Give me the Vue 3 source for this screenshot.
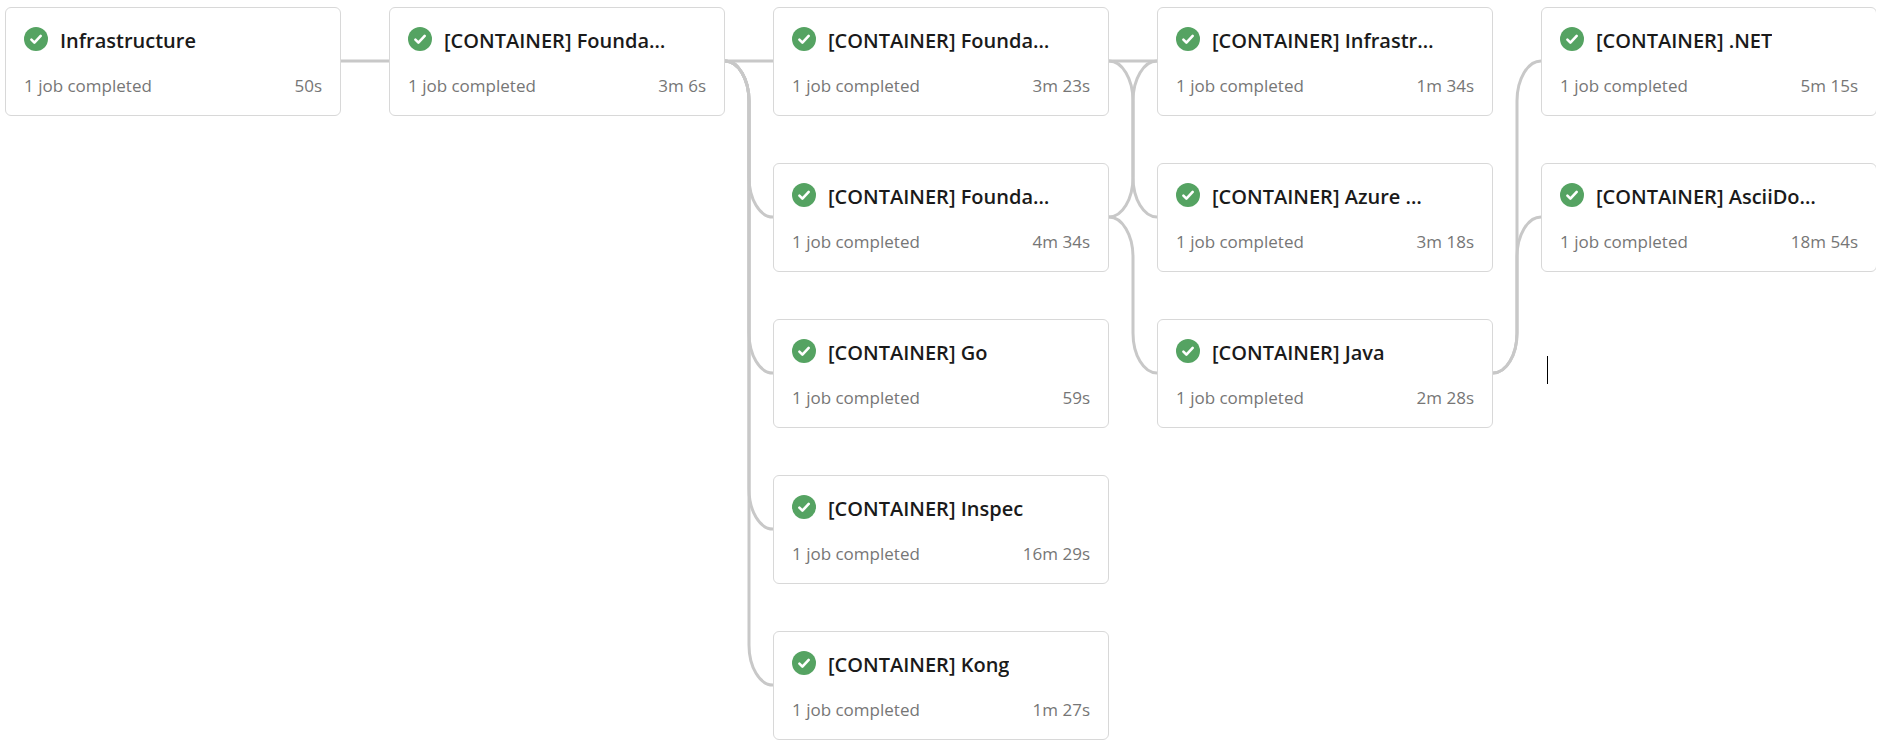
<script setup>
const columns = [
  [{ name: 'Infrastructure', time: '50s' }],
  [{ name: '[CONTAINER] Founda…', time: '3m 6s' }],
  [
    { name: '[CONTAINER] Founda…', time: '3m 23s' },
    { name: '[CONTAINER] Founda…', time: '4m 34s' },
    { name: '[CONTAINER] Go', time: '59s' },
    { name: '[CONTAINER] Inspec', time: '16m 29s' },
    { name: '[CONTAINER] Kong', time: '1m 27s' },
  ],
  [
    { name: '[CONTAINER] Infrastr…', time: '1m 34s' },
    { name: '[CONTAINER] Azure …', time: '3m 18s' },
    { name: '[CONTAINER] Java', time: '2m 28s' },
  ],
  [
    { name: '[CONTAINER] .NET', time: '5m 15s' },
    { name: '[CONTAINER] AsciiDo…', time: '18m 54s' },
  ],
]

// Each pair is [row on the left, row on the right] for the gap after a column.
const links = [
  [[0, 0]],
  [[0, 0], [0, 1], [0, 2], [0, 3], [0, 4]],
  [[0, 0], [0, 1], [1, 0], [1, 2]],
  [[2, 0], [2, 1]],
]

const ROW = 156
const MID = 54

function linkPath([from, to]) {
  const y1 = from * ROW + MID
  const y2 = to * ROW + MID
  if (y1 === y2) return `M0 ${y1}H48`
  const d = y2 > y1 ? 1 : -1
  const sweep = d > 0 ? 1 : 0
  return `M0 ${y1}A24 40 0 0 ${sweep} 24 ${y1 + 40 * d}V${y2 - 40 * d}A24 40 0 0 ${1 - sweep} 48 ${y2}`
}
</script>

<template>
  <main class="viewport">
    <div class="graph">
      <template v-for="(stages, c) in columns" :key="c">
        <section class="column">
          <article v-for="(stage, r) in stages" :key="r" class="card">
            <header class="head">
              <svg class="status" viewBox="0 0 24 24" aria-hidden="true">
                <circle cx="12" cy="12" r="12" />
                <path d="M7.4 12.7L10.4 15.7L16.7 8.9" />
              </svg>
              <h2 class="title">{{ stage.name }}</h2>
            </header>
            <div class="foot">
              <span>1 job completed</span>
              <span>{{ stage.time }}</span>
            </div>
          </article>
          <div v-if="c === 4" class="caret"></div>
        </section>
        <svg v-if="c < links.length" class="links" aria-hidden="true">
          <path v-for="(link, i) in links[c]" :key="i" :d="linkPath(link)" />
        </svg>
      </template>
    </div>
  </main>
</template>

<style>
body {
  margin: 0;
  background: #fff;
}
</style>

<style scoped>
.viewport {
  margin-right: 6px;
  padding: 7px 0 16px 5px;
  overflow: hidden;
  font-family: "Segoe UI", "Open Sans", "Noto Sans", sans-serif;
}
.graph {
  display: grid;
  grid-template-columns: minmax(0, 1fr) repeat(4, 48px minmax(0, 1fr));
  margin-right: -1px;
}
.column {
  display: flex;
  flex-direction: column;
  gap: 47px;
}
.card {
  padding: 18px 18px 17px;
  border: 1px solid #d8d8d8;
  border-radius: 6px;
  background: #fff;
}
.head {
  display: flex;
  align-items: flex-start;
  gap: 12px;
}
.status {
  flex: none;
  width: 24px;
  height: 24px;
  margin-top: 1px;
}
.status circle {
  fill: #55a362;
}
.status path {
  fill: none;
  stroke: #fff;
  stroke-width: 2.6;
  stroke-linecap: round;
  stroke-linejoin: round;
}
.title {
  margin: 0;
  min-width: 0;
  overflow: hidden;
  white-space: nowrap;
  font-size: 20px;
  font-weight: 600;
  line-height: 30px;
  color: #1a1a1a;
}
.foot {
  display: flex;
  justify-content: space-between;
  margin-top: 18px;
  font-size: 17px;
  line-height: 24px;
  white-space: nowrap;
  color: #767676;
}
.links {
  width: 48px;
  height: 100%;
}
.links path {
  fill: none;
  stroke: #c8c8c8;
  stroke-width: 3;
}
.caret {
  width: 1px;
  height: 28px;
  margin: 37px 0 0 6px;
  background: #000;
}
</style>
